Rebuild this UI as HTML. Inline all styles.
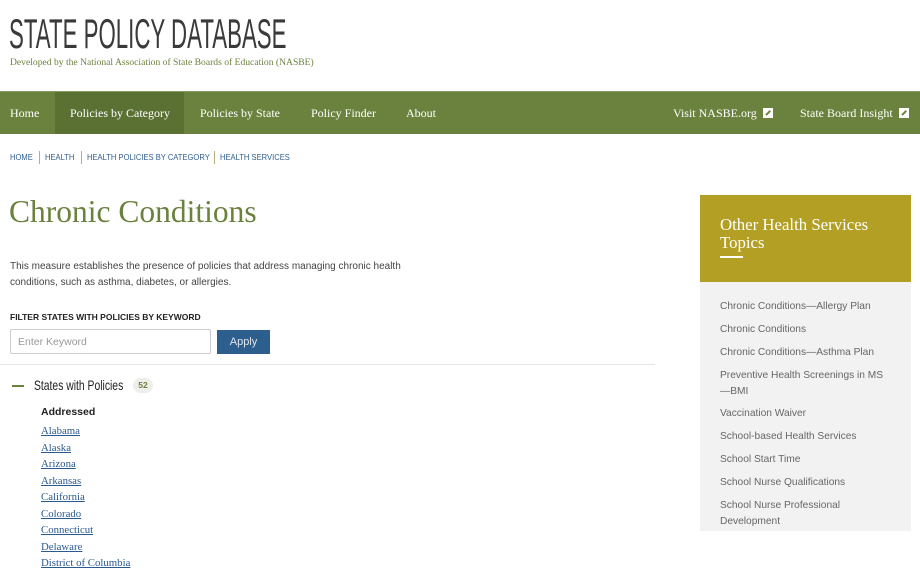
<!DOCTYPE html>
<html><head><style>
*{margin:0;padding:0;box-sizing:border-box}
body{width:920px;height:575px;overflow:hidden;background:#fff;font-family:"Liberation Sans",sans-serif;position:relative}
.abs{position:absolute;white-space:nowrap}
.serif{font-family:"Liberation Serif","DejaVu Serif",serif}
nav{position:absolute;left:0;top:91px;width:920px;height:43px;background:#6a823d;border-top:1px solid #8a9e62}
nav span{position:absolute;top:14px;color:#fff;font-size:12px;font-family:"Liberation Serif",serif}
.ext{display:inline-block;width:10px;height:10px;background:#fff;margin-left:6px;vertical-align:-1px;position:relative}
.ext:after{content:"";position:absolute;left:2px;top:4px;width:6px;height:1.6px;background:#6a823d;transform:rotate(-45deg)}
.bc{font-size:8px;color:#2f5f8f;top:153px;transform:scaleX(0.95);transform-origin:left}
.sep{position:absolute;top:151px;width:1px;height:13px;background:#b8b07a}
.st{position:absolute;left:41px;font-size:10.8px;font-family:"Liberation Serif",serif;color:#2b5a8f;text-decoration:underline}
.side{position:absolute;left:720px;font-size:10.2px;color:#666;line-height:16px}
</style></head><body>
<div class="abs" style="left:9px;top:10px;font-size:42px;color:#3a3a3a;transform:scaleX(0.53);transform-origin:left">STATE POLICY DATABASE</div>
<div class="abs serif" style="left:10px;top:57px;font-size:9.6px;color:#6a823d">Developed by the National Association of State Boards of Education (NASBE)</div>
<nav>
<div style="position:absolute;left:55px;top:0;width:129px;height:42px;background:#5b7033"></div>
<span style="left:10px">Home</span>
<span style="left:70px">Policies by Category</span>
<span style="left:200px">Policies by State</span>
<span style="left:311px">Policy Finder</span>
<span style="left:406px">About</span>
<span style="left:673px">Visit NASBE.org<i class="ext"></i></span>
<span style="left:800px">State Board Insight<i class="ext"></i></span>
</nav>
<div class="abs bc" style="left:10px">HOME</div><div class="sep" style="left:39px"></div>
<div class="abs bc" style="left:45px">HEALTH</div><div class="sep" style="left:81px"></div>
<div class="abs bc" style="left:87px">HEALTH POLICIES BY CATEGORY</div><div class="sep" style="left:214px"></div>
<div class="abs bc" style="left:220px">HEALTH SERVICES</div>
<div class="abs serif" style="left:9px;top:194px;font-size:31.5px;color:#6a823d">Chronic Conditions</div>
<div class="abs" style="left:10px;top:259px;font-size:10px;color:#444;line-height:16px;white-space:normal;width:420px">This measure establishes the presence of policies that address managing chronic health conditions, such as asthma, diabetes, or allergies.</div>
<div class="abs" style="left:10px;top:312px;font-size:8.5px;font-weight:bold;color:#222">FILTER STATES WITH POLICIES BY KEYWORD</div>
<div style="position:absolute;left:10px;top:329px;width:201px;height:25px;border:1px solid #ccc;border-radius:2px"></div>
<div class="abs" style="left:18px;top:336px;font-size:10.5px;color:#999">Enter Keyword</div>
<div style="position:absolute;left:217px;top:330px;width:53px;height:24px;background:#2c5f8d;color:#dfe6ee;font-size:11px;text-align:center;line-height:25px">Apply</div>
<div style="position:absolute;left:0;top:364px;width:655px;height:1px;background:#e6e6e6"></div>
<div style="position:absolute;left:12px;top:385px;width:12px;height:2px;background:#6a823d"></div>
<div class="abs" style="left:34px;top:377px;font-size:14px;color:#222;transform:scaleX(0.74);transform-origin:left">States with Policies</div>
<div style="position:absolute;left:133px;top:378px;width:20px;height:15px;background:#eeeeea;border-radius:8px;font-size:8.5px;color:#6a823d;font-weight:bold;text-align:center;line-height:15px">52</div>
<div class="abs" style="left:41px;top:406px;font-size:10.5px;font-weight:bold;color:#222">Addressed</div>
<div class="st" style="top:425px">Alabama</div>
<div class="st" style="top:442px">Alaska</div>
<div class="st" style="top:458px">Arizona</div>
<div class="st" style="top:475px">Arkansas</div>
<div class="st" style="top:491px">California</div>
<div class="st" style="top:508px">Colorado</div>
<div class="st" style="top:524px">Connecticut</div>
<div class="st" style="top:541px">Delaware</div>
<div class="st" style="top:557px">District of Columbia</div>
<div style="position:absolute;left:700px;top:195px;width:211px;height:87px;background:#b39f23"></div>
<div class="abs serif" style="left:720px;top:216px;font-size:16.8px;color:#fff;line-height:18px">Other Health Services<br>Topics</div>
<div style="position:absolute;left:720px;top:256px;width:23px;height:2px;background:#fff"></div>
<div style="position:absolute;left:700px;top:282px;width:211px;height:249px;background:#f2f2f2"></div>
<div class="side" style="top:299px">Chronic Conditions—Allergy Plan</div>
<div class="side" style="top:322px">Chronic Conditions</div>
<div class="side" style="top:345px">Chronic Conditions—Asthma Plan</div>
<div class="side" style="top:368px">Preventive Health Screenings in MS<br>—BMI</div>
<div class="side" style="top:406px">Vaccination Waiver</div>
<div class="side" style="top:429px">School-based Health Services</div>
<div class="side" style="top:452px">School Start Time</div>
<div class="side" style="top:475px">School Nurse Qualifications</div>
<div class="side" style="top:498px">School Nurse Professional<br>Development</div>
</body></html>
